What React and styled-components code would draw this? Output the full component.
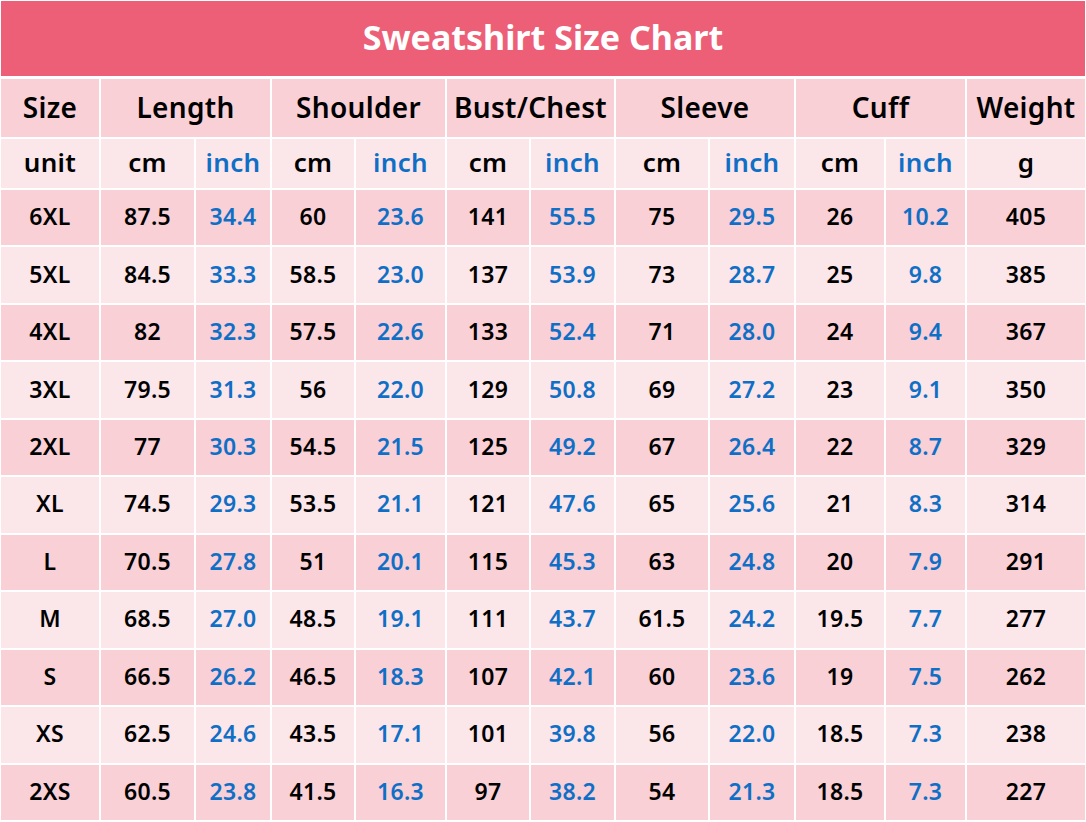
import React from 'react';
import styled, { createGlobalStyle } from 'styled-components';

const GlobalStyle = createGlobalStyle`
  html, body {
    margin: 0;
    padding: 0;
    background: #fff;
  }
  body {
    font-family: "Noto Sans", "Open Sans", sans-serif;
  }
`

const groups = ['Length', 'Shoulder', 'Bust/Chest', 'Sleeve', 'Cuff']

const rows = [
  ['6XL', '87.5', '34.4', '60', '23.6', '141', '55.5', '75', '29.5', '26', '10.2', '405'],
  ['5XL', '84.5', '33.3', '58.5', '23.0', '137', '53.9', '73', '28.7', '25', '9.8', '385'],
  ['4XL', '82', '32.3', '57.5', '22.6', '133', '52.4', '71', '28.0', '24', '9.4', '367'],
  ['3XL', '79.5', '31.3', '56', '22.0', '129', '50.8', '69', '27.2', '23', '9.1', '350'],
  ['2XL', '77', '30.3', '54.5', '21.5', '125', '49.2', '67', '26.4', '22', '8.7', '329'],
  ['XL', '74.5', '29.3', '53.5', '21.1', '121', '47.6', '65', '25.6', '21', '8.3', '314'],
  ['L', '70.5', '27.8', '51', '20.1', '115', '45.3', '63', '24.8', '20', '7.9', '291'],
  ['M', '68.5', '27.0', '48.5', '19.1', '111', '43.7', '61.5', '24.2', '19.5', '7.7', '277'],
  ['S', '66.5', '26.2', '46.5', '18.3', '107', '42.1', '60', '23.6', '19', '7.5', '262'],
  ['XS', '62.5', '24.6', '43.5', '17.1', '101', '39.8', '56', '22.0', '18.5', '7.3', '238'],
  ['2XS', '60.5', '23.8', '41.5', '16.3', '97', '38.2', '54', '21.3', '18.5', '7.3', '227'],
]

// inch columns sit at even indexes between size and weight
const isInch = (i) => i > 0 && i < 11 && i % 2 === 0

export default function App() {
  return (
    <Page>
      <GlobalStyle/>
      <TitleBar>Sweatshirt Size Chart</TitleBar>
      <Grid>
        <HeadCell>Size</HeadCell>
        {groups.map(g => (
          <HeadCell key={g} span={2}>{g}</HeadCell>
        ))}
        <HeadCell>Weight</HeadCell>

        <UnitCell>unit</UnitCell>
        {groups.map(g => (
          <React.Fragment key={g}>
            <UnitCell>cm</UnitCell>
            <UnitCell blue>inch</UnitCell>
          </React.Fragment>
        ))}
        <UnitCell>g</UnitCell>

        {rows.map((row, r) =>
          row.map((val, i) => (
            <DataCell key={r + '-' + i} light={r % 2 === 1} blue={isInch(i)}>
              {val}
            </DataCell>
          ))
        )}
      </Grid>
    </Page>
  )
}

const Page = styled.div`
  width: 1086px;
  height: 822px;
  box-sizing: border-box;
  padding: 1px;
  background: #fff;
  display: flex;
  flex-direction: column;
  gap: 3px;
`

const TitleBar = styled.div`
  height: 75px;
  flex-shrink: 0;
  box-sizing: border-box;
  padding-bottom: 3px;
  background: #ec5f76;
  color: #fff;
  display: flex;
  justify-content: center;
  align-items: center;
  font-size: 34px;
  font-weight: 700;
`

const Grid = styled.div`
  display: grid;
  grid-template-columns: 98px 93px 74px 82px 89px 82px 83px 92px 84px 88px 79px 118px;
  grid-template-rows: 58px 49px repeat(11, 1fr);
  gap: 2px;
  height: 741px;
`

const Cell = styled.div`
  display: flex;
  justify-content: center;
  align-items: center;
  box-sizing: border-box;
  padding-bottom: 3px;
  color: ${p => (p.blue ? '#0f6fc6' : '#000')};
  font-weight: 600;
  letter-spacing: 0.3px;
  white-space: nowrap;
`

const HeadCell = styled(Cell)`
  grid-column: span ${p => p.span || 1};
  background: #f8d0d6;
  font-size: 28px;
`

const UnitCell = styled(Cell)`
  background: #fbe6e9;
  font-size: 26px;
`

const DataCell = styled(Cell)`
  background: ${p => (p.light ? '#fbe6e9' : '#f8d0d6')};
  font-size: 23px;
`
